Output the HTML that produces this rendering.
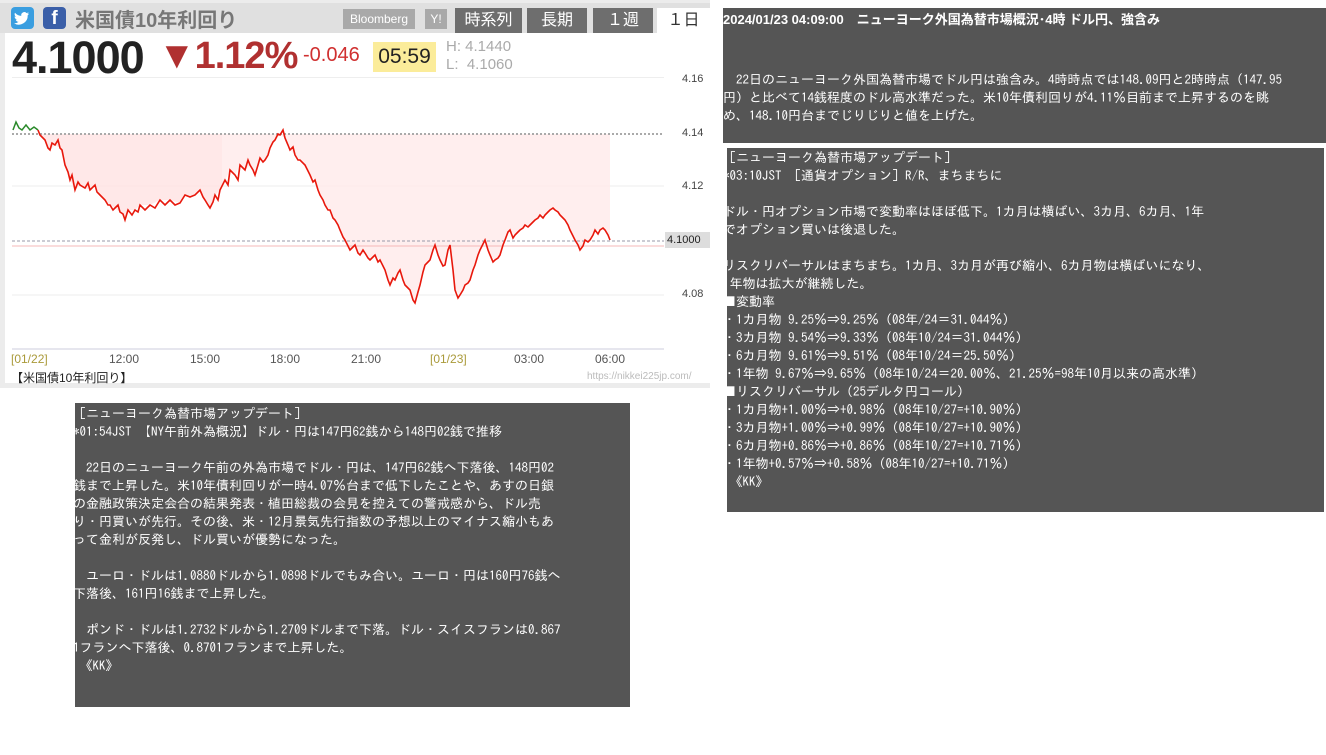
<!DOCTYPE html>
<html><head><meta charset="utf-8"><style>
*{margin:0;padding:0;box-sizing:border-box}
body{width:1326px;height:755px;background:#fff;position:relative;overflow:hidden;font-family:"Liberation Sans","Noto Sans CJK JP",sans-serif}
.a{position:absolute}
.box{position:absolute;background:#555;color:#fff;font-family:"IPAGothic","Noto Sans CJK JP",monospace;font-size:13px;line-height:18px;white-space:pre;overflow:hidden}
.tab{position:absolute;top:8px;height:25px;background:#6e6e6e;color:#fff;font-size:16px;text-align:center;line-height:26px;font-family:"Liberation Sans","Noto Sans CJK JP",sans-serif}
.tl{position:absolute;top:352px;font-size:12px;color:#555;font-family:"Liberation Sans",sans-serif}
.yl{position:absolute;left:682px;font-size:11px;color:#444}
</style></head><body>
<div class="a" style="left:0;top:0;width:710px;height:388px;background:#ececec"></div>
<div class="a" style="left:5px;top:33px;width:705px;height:350px;background:#fff"></div>
<div class="a" style="left:0;top:3px;width:710px;height:30px;background:#e0e0e0"></div>
<div class="a" style="left:11px;top:7px;width:23px;height:22px;background:#3a9ee0;border-radius:4px"><svg width="23" height="22" viewBox="0 0 23 22"><path d="M18 6.5c-.6.3-1.2.4-1.8.5.7-.4 1.1-1 1.4-1.7-.6.4-1.3.6-2 .8a3.1 3.1 0 0 0-5.3 2.8C7.7 8.8 5.5 7.6 4 5.8c-.8 1.4-.3 3.2 1 4.1-.5 0-1-.2-1.4-.4 0 1.5 1.1 2.8 2.5 3.1-.5.1-1 .2-1.4.1.4 1.3 1.6 2.1 2.9 2.2A6.300 6.300 0 0 1 3 16.2 8.9 8.9 0 0 0 16.7 8.3c.6-.5 1-1 1.3-1.8z" fill="#fff"/></svg></div>
<div class="a" style="left:43px;top:7px;width:23px;height:22px;background:#3b5fa8;border-radius:4px;color:#fff;font-weight:bold;font-size:19px;text-align:center;line-height:24px">f</div>
<div class="a" style="left:75px;top:4px;font-size:20px;color:#777;font-weight:bold">米国債10年利回り</div>
<div class="a" style="left:343px;top:9px;width:72px;height:20px;background:#a9a9a9;color:#fff;font-size:12px;text-align:center;line-height:20px">Bloomberg</div>
<div class="a" style="left:425px;top:9px;width:22px;height:20px;background:#a9a9a9;color:#fff;font-size:12px;text-align:center;line-height:20px">Y!</div>
<div class="tab" style="left:455px;width:67px">時系列</div>
<div class="tab" style="left:527px;width:60px">長期</div>
<div class="tab" style="left:593px;width:60px">１週</div>
<div class="tab" style="left:657px;width:53px;background:#fff;color:#333">１日</div>
<div class="a" style="left:12px;top:32px;font-size:45px;font-weight:bold;color:#222;letter-spacing:-1px">4.1000</div>
<div class="a" style="left:158px;top:35px;font-size:38px;font-weight:bold;color:#b03030;letter-spacing:-1px">▼1.12%</div>
<div class="a" style="left:303px;top:44px;font-size:20px;color:#d03030">-0.046</div>
<div class="a" style="left:373px;top:42px;width:63px;height:30px;background:#fbec9a;font-size:21px;color:#222;text-align:center;line-height:30px">05:59</div>
<div class="a" style="left:446px;top:38px;font-size:15px;color:#aaa;line-height:18px">H: 4.1440<br>L:&nbsp; 4.1060</div>
<div class="a" style="left:12px;top:77px;width:652px;height:1px;background:#eee"></div>
<svg class="a" style="left:0;top:0" width="710" height="388">
<line x1="12" y1="186" x2="664" y2="186" stroke="#eee"/>
<line x1="12" y1="295" x2="664" y2="295" stroke="#eee"/>
<line x1="12" y1="349" x2="664" y2="349" stroke="#ccd"/>
<polygon fill="#ffe2e2" opacity="0.8" points="40,134 45,140 50,150 55,145 60,148 65,165 70,180 75,190 80,185 85,188 90,190 95,185 100,195 105,200 110,205 115,208 120,212 125,220 128,210 135,210 140,205 150,205 160,200 170,200 180,203 185,195 190,197 195,195 200,190 205,200 210,208 215,195 220,190 222,186 222,134"/>
<polygon fill="#ffeaea" opacity="0.8" points="222,134 222,186 225,180 230,170 235,175 240,165 245,170 250,165 255,175 260,158 265,160 270,148 275,140 280,135 285,138 290,150 295,155 300,160 310,175 315,180 320,195 325,205 330,210 335,220 340,230 345,240 350,250 355,245 360,255 365,253 370,260 375,255 380,260 385,270 390,285 395,280 400,270 405,285 410,290 415,303 420,285 425,265 430,260 435,245 440,260 445,265 450,245 455,290 460,295 465,285 470,280 475,265 480,250 485,240 490,255 495,260 500,255 505,240 510,230 515,235 520,230 525,225 530,225 535,220 540,215 545,215 550,210 555,210 560,215 565,220 570,230 575,240 580,250 585,240 590,240 595,230 600,230 605,230 610,240 610,134"/>
<line x1="12" y1="134" x2="664" y2="134" stroke="#aaa" stroke-dasharray="2,2" stroke-width="2"/>
<line x1="12" y1="241" x2="664" y2="241" stroke="#99a" stroke-dasharray="3,2"/>
<line x1="12" y1="246" x2="664" y2="246" stroke="#f5b8b8"/>
<polyline fill="none" stroke="#2a8a2a" stroke-width="1.5" points="13,130 16,122 19,128 22,130 26,125 30,130 34,127 38,130"/>
<polyline fill="none" stroke="#e8180c" stroke-width="1.6" points="38,130 40,135 45,140 48,148 50,150 52,143 55,145 58,140 60,148 62,150 65,165 68,172 70,180 72,175 75,190 78,182 80,185 85,188 88,183 90,190 95,185 97,192 100,195 105,200 108,205 110,205 113,210 115,208 118,205 120,212 123,214 125,220 128,210 132,215 135,210 138,212 140,205 145,210 150,205 155,208 160,200 165,205 170,200 175,205 180,203 185,195 190,197 195,195 200,190 203,197 205,200 208,205 210,208 213,202 215,195 218,200 220,190 225,180 228,185 230,170 235,175 238,180 240,165 245,170 248,160 250,165 253,170 255,175 258,165 260,158 263,162 265,160 268,155 270,148 273,142 275,140 278,134 280,135 283,130 285,138 288,145 290,150 293,147 295,155 298,160 300,160 305,165 310,175 313,182 315,180 318,190 320,195 323,200 325,205 328,210 330,210 333,218 335,220 338,225 340,230 343,237 345,240 348,246 350,250 353,247 355,245 358,253 360,255 363,250 365,253 368,258 370,260 373,257 375,255 378,262 380,260 383,266 385,270 388,280 390,285 393,278 395,280 398,273 400,270 403,280 405,285 408,288 410,290 413,300 415,303 418,292 420,285 423,272 425,265 428,262 430,260 433,250 435,245 438,255 440,260 443,266 445,265 448,250 450,245 453,270 455,290 458,298 460,295 463,290 465,285 468,283 470,280 473,270 475,265 478,255 480,250 483,244 485,240 488,250 490,255 493,262 495,260 498,258 500,255 503,245 505,240 508,232 510,230 513,238 515,235 518,232 520,230 523,228 525,225 528,227 530,225 533,222 535,220 538,218 540,215 543,218 545,215 548,212 550,210 553,208 555,210 558,212 560,215 563,218 565,220 568,225 570,230 573,236 575,240 578,245 580,250 583,246 585,240 588,242 590,240 593,235 595,230 598,234 600,230 603,228 605,230 608,235 610,240"/>
</svg>
<div class="yl" style="top:73px">4.16</div>
<div class="yl" style="top:127px">4.14</div>
<div class="yl" style="top:180px">4.12</div>
<div class="yl" style="top:288px">4.08</div>
<div class="a" style="left:665px;top:232px;width:45px;height:16px;background:#ddd;font-size:11px;color:#222;line-height:16px;padding-left:2px">4.1000</div>
<div class="tl" style="left:11px;color:#aa9a3a">[01/22]</div>
<div class="tl" style="left:109px">12:00</div>
<div class="tl" style="left:190px">15:00</div>
<div class="tl" style="left:270px">18:00</div>
<div class="tl" style="left:351px">21:00</div>
<div class="tl" style="left:430px;color:#aa9a3a">[01/23]</div>
<div class="tl" style="left:514px">03:00</div>
<div class="tl" style="left:595px">06:00</div>
<div class="a" style="left:11px;top:369px;font-size:12px;color:#222">【米国債10年利回り】</div>
<div class="a" style="left:587px;top:371px;font-size:10px;color:#bbb">https://nikkei225jp.com/</div>

<div class="box" style="left:723px;top:8px;width:603px;height:135px"><div style="position:absolute;left:0;top:3px;font-weight:bold;font-family:'Liberation Sans','Noto Sans CJK JP',sans-serif;font-size:13px">2024/01/23 04:09:00　ニューヨーク外国為替市場概況･4時 ドル円、強含み</div><div style="position:absolute;left:0;top:63px">　22日のニューヨーク外国為替市場でドル円は強含み。4時時点では148.09円と2時時点（147.95
円）と比べて14銭程度のドル高水準だった。米10年債利回りが4.11％目前まで上昇するのを眺
め、148.10円台までじりじりと値を上げた。</div></div>

<div class="box" style="left:727px;top:148px;width:597px;height:364px;padding-top:1px"><div style="margin-left:-4px">［ニューヨーク為替市場アップデート］
*03:10JST ［通貨オプション］R/R、まちまちに

ドル・円オプション市場で変動率はほぼ低下。1カ月は横ばい、3カ月、6カ月、1年
でオプション買いは後退した。

リスクリバーサルはまちまち。1カ月、3カ月が再び縮小、6カ月物は横ばいになり、
1年物は拡大が継続した。
■変動率
・1カ月物 9.25％⇒9.25％（08年/24＝31.044％）
・3カ月物 9.54％⇒9.33％（08年10/24＝31.044％）
・6カ月物 9.61％⇒9.51％（08年10/24＝25.50％）
・1年物 9.67％⇒9.65％（08年10/24＝20.00％、21.25％=98年10月以来の高水準）
■リスクリバーサル（25デルタ円コール）
・1カ月物+1.00％⇒+0.98％（08年10/27=+10.90％）
・3カ月物+1.00％⇒+0.99％（08年10/27=+10.90％）
・6カ月物+0.86％⇒+0.86％（08年10/27=+10.71％）
・1年物+0.57％⇒+0.58％（08年10/27=+10.71％）
 《KK》</div></div>

<div class="box" style="left:75px;top:403px;width:555px;height:304px;padding-top:2px"><div style="margin-left:-2px">［ニューヨーク為替市場アップデート］
*01:54JST 【NY午前外為概況】ドル・円は147円62銭から148円02銭で推移

　22日のニューヨーク午前の外為市場でドル・円は、147円62銭へ下落後、148円02
銭まで上昇した。米10年債利回りが一時4.07％台まで低下したことや、あすの日銀
の金融政策決定会合の結果発表・植田総裁の会見を控えての警戒感から、ドル売
り・円買いが先行。その後、米・12月景気先行指数の予想以上のマイナス縮小もあ
って金利が反発し、ドル買いが優勢になった。

　ユーロ・ドルは1.0880ドルから1.0898ドルでもみ合い。ユーロ・円は160円76銭へ
下落後、161円16銭まで上昇した。

　ポンド・ドルは1.2732ドルから1.2709ドルまで下落。ドル・スイスフランは0.867
1フランへ下落後、0.8701フランまで上昇した。
 《KK》</div></div>
</body></html>
